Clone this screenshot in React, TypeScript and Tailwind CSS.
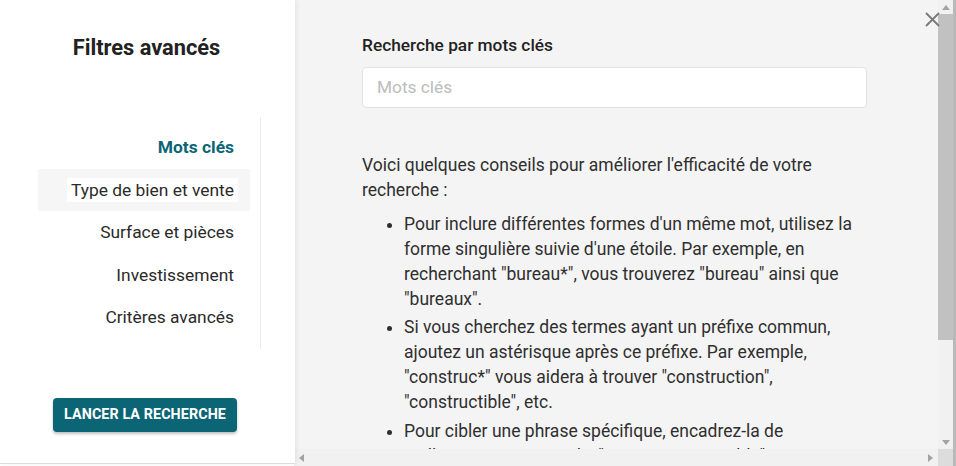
import React from "react";

const navItems = [
  "Mots clés",
  "Type de bien et vente",
  "Surface et pièces",
  "Investissement",
  "Critères avancés",
];

function Sidebar() {
  return (
    <div className="relative z-10 w-[295px] shrink-0 h-[464px] bg-white border-b border-[#dcdcdc] shadow-[2px_0_4px_rgba(0,0,0,0.06)] flex flex-col">
      <h2 className="mt-[36px] h-[24px] leading-[24px] text-center text-[21.8px] font-bold text-[#222] pr-[2px]">
        Filtres avancés
      </h2>

      {/* Nav */}
      <div className="mt-[57px] ml-[38px] w-[223px] border-r border-[#ececec] pt-[9px] pb-[10px] pr-[10px]">
        {navItems.map((item, i) => {
          const isActive = i === 0;
          const isHover = i === 1;
          return (
            <div
              key={item}
              className={`h-[42.5px] flex items-center justify-end pr-[16px] text-[17.4px] ${
                isActive
                  ? "font-bold text-[#0b6575]"
                  : isHover
                    ? "bg-[#f6f6f6] text-[#2a2a2a]"
                    : "text-[#2a2a2a]"
              }`}
            >
              <span className={isHover ? "bg-white px-[4px] -mr-[4px] leading-[24px]" : ""}>
                {item}
              </span>
            </div>
          );
        })}
      </div>

      <button className="mt-[49px] ml-[53px] w-[184px] h-[34px] rounded-[4px] bg-[#0b6575] text-white text-[14.3px] font-bold tracking-[0.1px] shadow-[0_2px_3px_rgba(0,0,0,0.25)]">
        LANCER LA RECHERCHE
      </button>
    </div>
  );
}

function Arrow({ dir }: { dir: "up" | "down" | "left" | "right" }) {
  const pts = {
    up: "0,5 4,0 8,5",
    down: "0,0 8,0 4,5",
    left: "5,0 5,8 0,4",
    right: "0,0 0,8 5,4",
  }[dir];
  const w = dir === "up" || dir === "down" ? 8 : 5;
  const h = dir === "up" || dir === "down" ? 5 : 8;
  return (
    <svg width={w} height={h} viewBox={`0 0 ${w} ${h}`}>
      <polygon points={pts} fill="#a3a3a3" />
    </svg>
  );
}

function Content() {
  return (
    <div className="flex-1 min-w-0 overflow-hidden pl-[68px] pt-[33px] text-[#2f2f2f]">
      <div className="w-[505px]">
        <h3 className="text-[17.3px] leading-[24px] font-medium text-[#222]">
          Recherche par mots clés
        </h3>
        <div className="mt-[10px] h-[41px] bg-white border border-[#e2e2e2] rounded-[4px] flex items-center px-[14px] text-[17.3px] text-[#bcbcbc]">
          Mots clés
        </div>

        <p className="mt-[45px] text-[17.5px] leading-[25px]">
          Voici quelques conseils pour améliorer l'efficacité de votre recherche :
        </p>
        <ul className="mt-[9px] list-disc pl-[42px] text-[17.5px] leading-[25px]">
          <li className="mb-[3px]">
            Pour inclure différentes formes d'un même mot, utilisez la forme
            singulière suivie d'une étoile. Par exemple, en recherchant
            "bureau*", vous trouverez "bureau" ainsi que "bureaux".
          </li>
          <li className="mb-[4px]">
            Si vous cherchez des termes ayant un préfixe commun, ajoutez un
            astérisque après ce préfixe. Par exemple, "construc*" vous aidera à
            trouver "construction", "constructible", etc.
          </li>
          <li className="mb-[3px]">
            Pour cibler une phrase spécifique, encadrez-la de guillemets. Par
            exemple, "terrain constructible" vous donnera des résultats
            précis.
          </li>
        </ul>
      </div>
    </div>
  );
}

export default function App() {
  return (
    <div
      className="w-[956px] h-[466px] flex bg-white overflow-hidden"
      style={{ fontFamily: "Roboto, 'Liberation Sans', sans-serif" }}
    >
      <Sidebar />

      {/* Right panel */}
      <div className="relative flex-1 flex flex-col bg-[#f4f4f4] -ml-[1px]">
        <div className="flex h-[449px]">
          <Content />
          {/* Vertical scrollbar */}
          <div className="w-[15px] shrink-0 bg-[#f1f1f1] flex flex-col items-center">
            <div className="h-[14px] flex items-center justify-center">
              <Arrow dir="up" />
            </div>
            <div className="w-[15px] h-[326px] bg-[#c1c1c1]" />
            <div className="flex-1" />
            <div className="h-[14px] flex items-center justify-center">
              <Arrow dir="down" />
            </div>
          </div>
        </div>
        {/* Horizontal scrollbar */}
        <div className="flex h-[17px]">
          <div className="flex-1 bg-[#f1f1f1] flex items-center justify-between px-[5px]">
            <Arrow dir="left" />
            <Arrow dir="right" />
          </div>
          <div className="w-[15px] bg-[#dcdcdc]" />
        </div>

        {/* Close */}
        <button className="absolute top-[12px] right-[13px] w-[15px] h-[15px]">
          <svg width="15" height="15" viewBox="0 0 15 15">
            <path d="M1 1 L14 14 M14 1 L1 14" stroke="#7a7a7a" strokeWidth="1.8" />
          </svg>
        </button>
      </div>
      <div className="w-[3px] shrink-0 bg-[#b9b9b9]" />
    </div>
  );
}
